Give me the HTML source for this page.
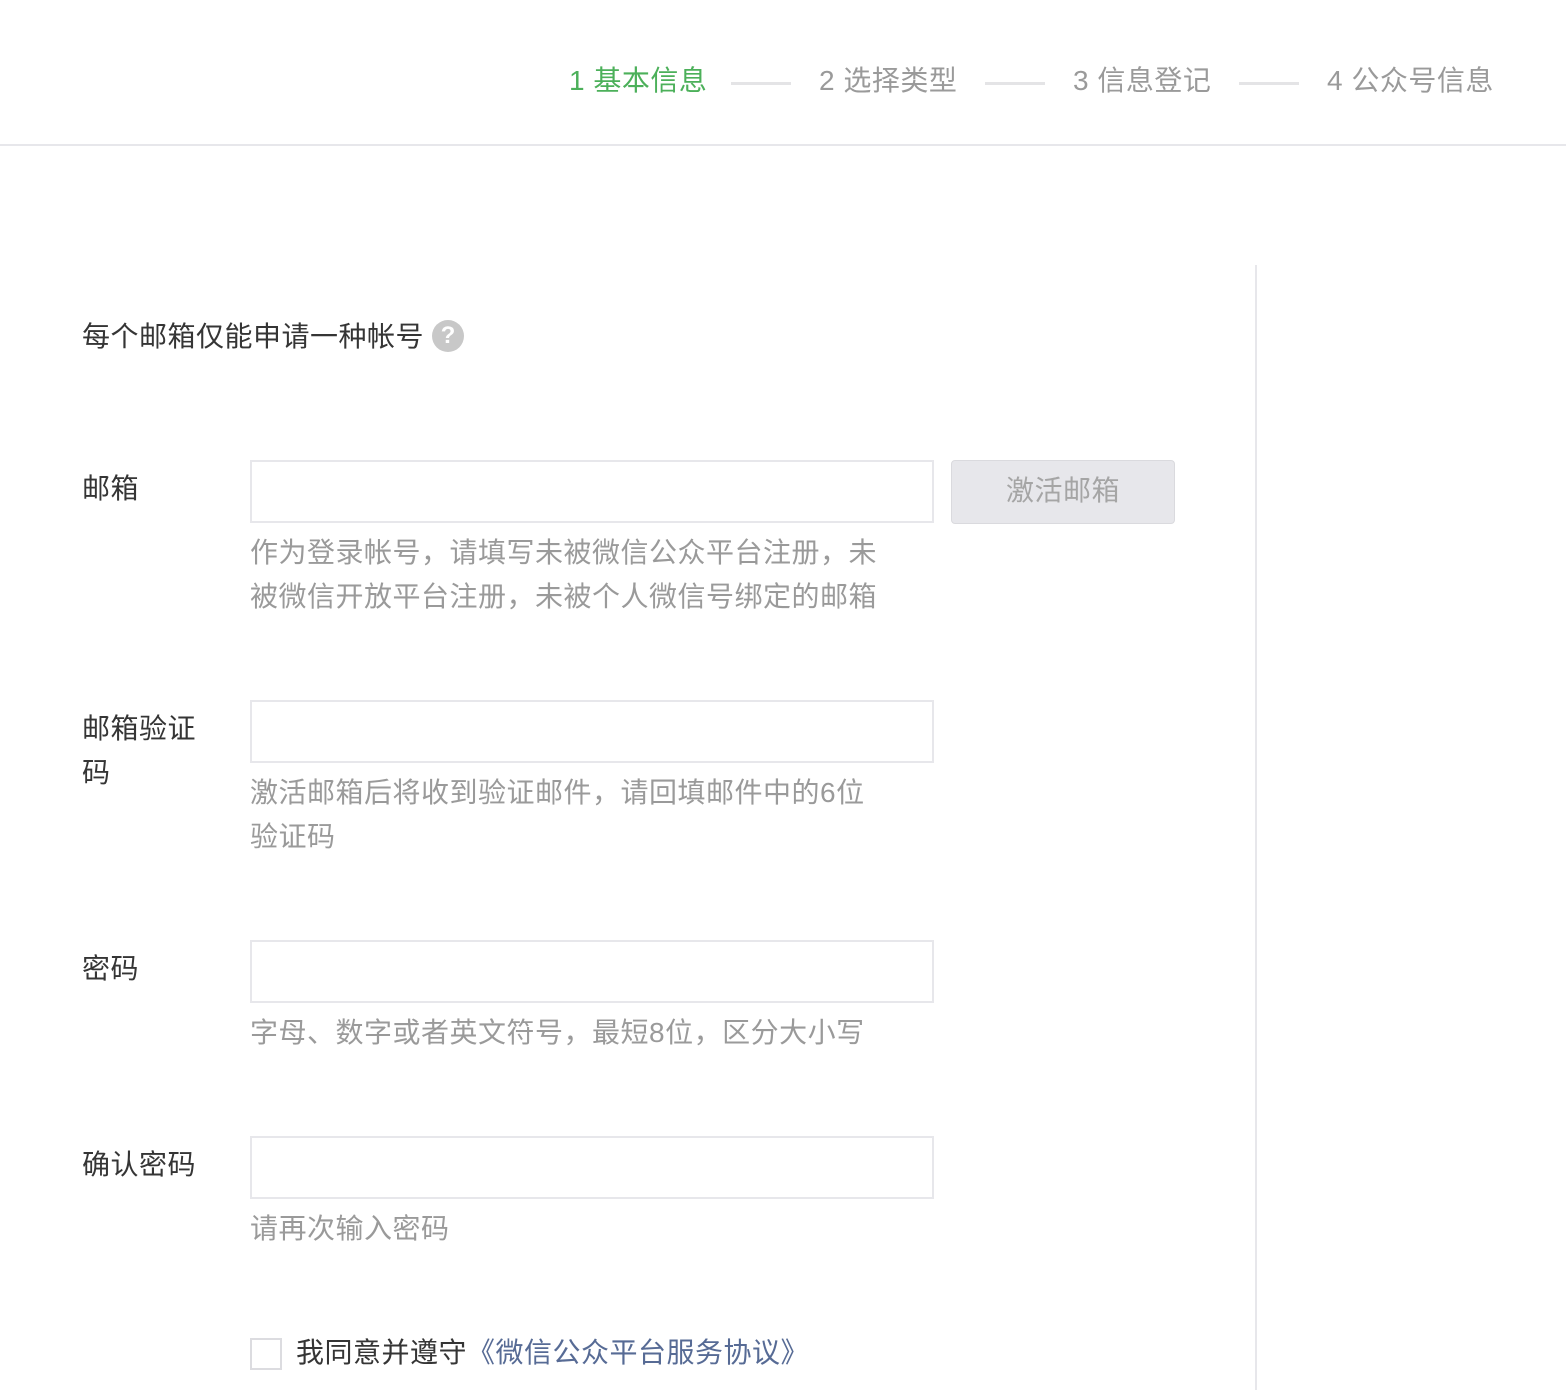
<!DOCTYPE html>
<html><head><meta charset="utf-8"><style>
*{margin:0;padding:0;box-sizing:border-box}
body{width:1566px;height:1390px;background:#fff;position:relative;overflow:hidden;font-family:"Liberation Sans","Noto Sans CJK SC",sans-serif;color:#353535;letter-spacing:0.5px}
.a{position:absolute;white-space:nowrap}
.st{font-size:28px;line-height:40px;top:61px;color:#9a9a9a}
.ln{position:absolute;top:82px;width:60px;height:3px;background:#e4e4e6}
.lab{font-size:28px;line-height:44px;left:82px}
.in{position:absolute;left:250px;width:684px;height:63px;border:2px solid #e7e7eb}
.tip{font-size:28px;line-height:44px;left:250px;color:#9a9a9a}
</style></head><body>
<div class="a st" style="left:569px;color:#4cb05a">1 基本信息</div>
<div class="ln" style="left:731px"></div>
<div class="a st" style="left:819px">2 选择类型</div>
<div class="ln" style="left:985px"></div>
<div class="a st" style="left:1073px">3 信息登记</div>
<div class="ln" style="left:1239px"></div>
<div class="a st" style="left:1327px">4 公众号信息</div>
<div style="position:absolute;left:0;top:144px;width:1566px;height:2px;background:#e7e7eb"></div>
<div style="position:absolute;left:1255px;top:265px;width:2px;height:1125px;background:#e7e7eb"></div>

<div class="a lab" style="top:315px">每个邮箱仅能申请一种帐号</div>
<div class="a" style="left:432px;top:320px;width:32px;height:32px;border-radius:50%;background:#c8c8c8;color:#fff;font-size:24px;font-weight:bold;line-height:32px;text-align:center;letter-spacing:0">?</div>

<div class="a lab" style="top:467px">邮箱</div>
<div class="in" style="top:460px"></div>
<div class="a" style="left:951px;top:460px;width:224px;height:64px;background:#e7e7eb;border:1px solid #dadade;border-radius:4px;color:#a5a5a5;font-size:28px;line-height:60px;text-align:center">激活邮箱</div>
<div class="a tip" style="top:531px">作为登录帐号，请填写未被微信公众平台注册，未</div>
<div class="a tip" style="top:575px">被微信开放平台注册，未被个人微信号绑定的邮箱</div>

<div class="a lab" style="top:707px">邮箱验证</div>
<div class="a lab" style="top:751px">码</div>
<div class="in" style="top:700px"></div>
<div class="a tip" style="top:771px">激活邮箱后将收到验证邮件，请回填邮件中的6位</div>
<div class="a tip" style="top:815px">验证码</div>

<div class="a lab" style="top:947px">密码</div>
<div class="in" style="top:940px"></div>
<div class="a tip" style="top:1011px">字母、数字或者英文符号，最短8位，区分大小写</div>

<div class="a lab" style="top:1143px">确认密码</div>
<div class="in" style="top:1136px"></div>
<div class="a tip" style="top:1207px">请再次输入密码</div>

<div class="a" style="left:250px;top:1338px;width:32px;height:32px;border:2px solid #dcdce0;background:#fff"></div>
<div class="a" style="left:296px;top:1331px;font-size:28px;line-height:44px">我同意并遵守<span style="color:#576b95">《微信公众平台服务协议》</span></div>
</body></html>
